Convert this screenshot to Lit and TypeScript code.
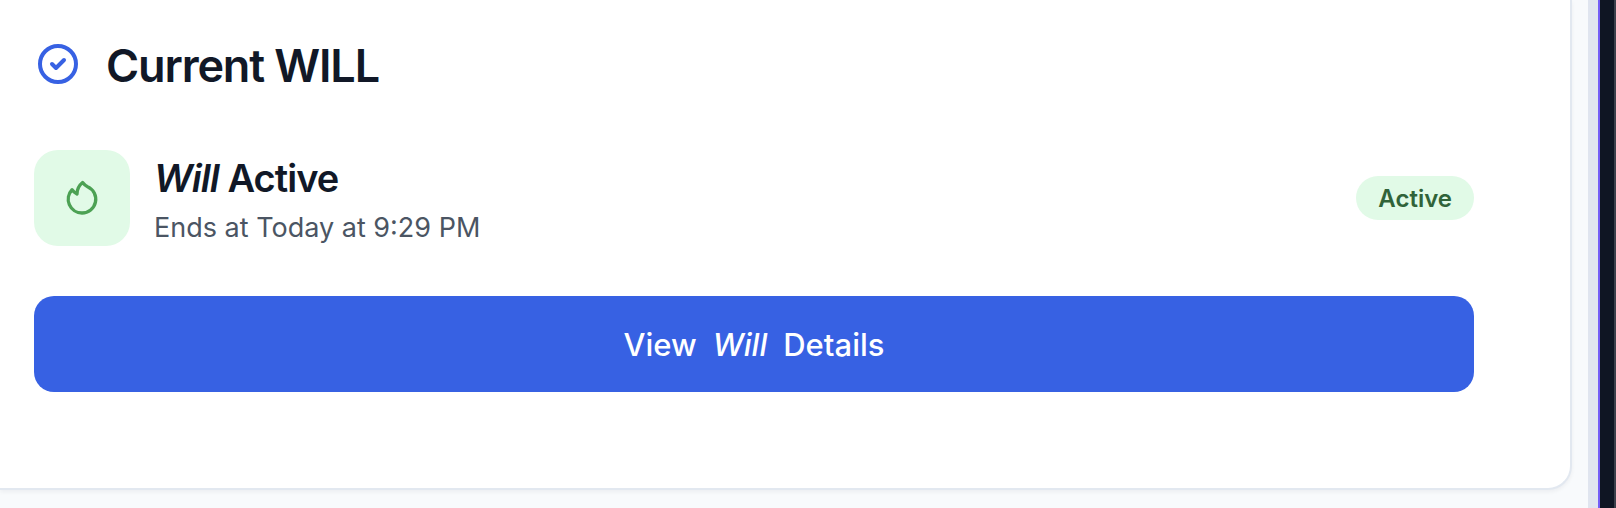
import { LitElement, html, css } from "lit";
import { customElement } from "lit/decorators.js";

@customElement("app-root")
export class AppRoot extends LitElement {
  static styles = css`
    :host {
      display: flex;
      min-height: 100vh;
      background: #f8fafc;
      color: #111827;
      font-family: Inter, "Liberation Sans", sans-serif;
      -webkit-font-smoothing: antialiased;
    }
    main {
      flex: 1;
      padding-right: 16px;
      padding-bottom: 18px;
    }
    .card {
      box-sizing: border-box;
      height: 100%;
      padding: 32px 96px 96px 34px;
      background: #ffffff;
      border: solid #e2e8f0;
      border-width: 0 2px 2px 0;
      border-radius: 0 0 24px 0;
      box-shadow: 0 2px 4px rgba(15, 23, 42, 0.05);
    }
    header {
      display: flex;
      align-items: center;
      gap: 24px;
      margin-bottom: 54px;
    }
    h2, h3, p { margin: 0; }
    h2 {
      padding-top: 4px;
      font-size: 45px;
      line-height: 60px;
      font-weight: 600;
      letter-spacing: -0.025em;
    }
    .check {
      width: 48px;
      height: 48px;
      color: #3761e3;
    }
    .status {
      display: flex;
      align-items: center;
      justify-content: space-between;
      margin-bottom: 50px;
    }
    .summary {
      display: flex;
      align-items: center;
      gap: 24px;
    }
    .tile {
      display: grid;
      place-items: center;
      width: 96px;
      height: 96px;
      border-radius: 24px;
      background: #e1fae7;
      color: #4ca154;
    }
    .flame {
      width: 40px;
      height: 40px;
    }
    .lines {
      display: grid;
      gap: 6px;
      padding-top: 2px;
    }
    h3 {
      font-size: 38px;
      line-height: 52px;
      font-weight: 600;
      letter-spacing: -0.025em;
    }
    p {
      color: #4b5563;
      font-size: 27px;
      line-height: 36px;
    }
    .badge {
      padding: 7px 22px 5px;
      border-radius: 24px;
      background: #e1fae7;
      color: #306339;
      font-size: 24px;
      line-height: 32px;
      font-weight: 600;
    }
    button {
      display: flex;
      align-items: center;
      justify-content: center;
      gap: 16px;
      width: 100%;
      padding: 25px 24px 23px;
      border: 0;
      border-radius: 20px;
      background: #3761e3;
      color: #ffffff;
      font: 500 31px/48px Inter, "Liberation Sans", sans-serif;
      cursor: pointer;
    }
    .gutter {
      width: 10px;
      background: #e0e5ef;
    }
    .edge {
      width: 14px;
      border-left: 2px solid #735df6;
      border-right: 2px solid #3b3f4b;
      background: #0f1523;
    }
  `;

  render() {
    return html`
      <main>
        <section class="card">
          <header>
            <svg class="check" viewBox="0 0 24 24" fill="none" stroke="currentColor" stroke-width="2" stroke-linecap="round" stroke-linejoin="round" aria-hidden="true">
              <path d="M9 12l2 2 4-4m6 2a9 9 0 11-18 0 9 9 0 0118 0z" />
            </svg>
            <h2>Current WILL</h2>
          </header>
          <div class="status">
            <div class="summary">
              <div class="tile">
                <svg class="flame" viewBox="0 0 24 24" fill="none" stroke="currentColor" stroke-width="2" stroke-linecap="round" stroke-linejoin="round" aria-hidden="true">
                  <path d="M15.362 5.214A8.252 8.252 0 0112 21 8.25 8.25 0 016.038 7.048 8.287 8.287 0 009 9.6a8.983 8.983 0 013.361-6.867 8.21 8.21 0 003 2.48z" />
                </svg>
              </div>
              <div class="lines">
                <h3><em>Will</em> Active</h3>
                <p>Ends at Today at 9:29 PM</p>
              </div>
            </div>
            <span class="badge">Active</span>
          </div>
          <button type="button"><span>View</span><em>Will</em><span>Details</span></button>
        </section>
      </main>
      <div class="gutter"></div>
      <div class="edge"></div>
    `;
  }
}
